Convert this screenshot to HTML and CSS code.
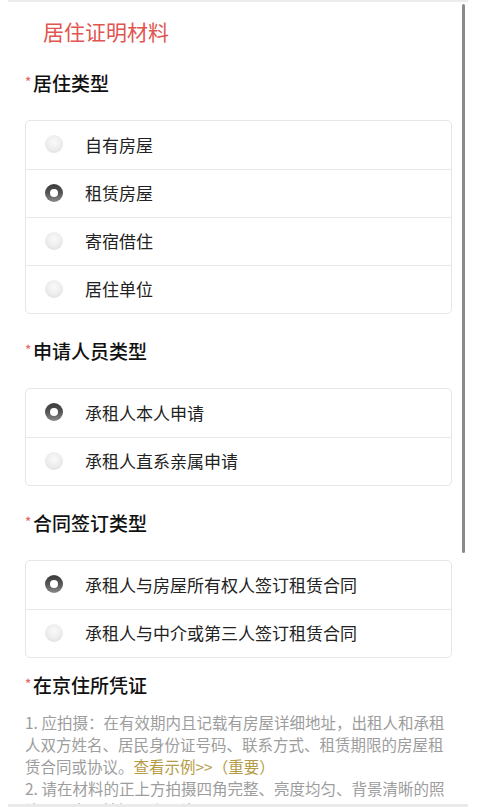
FILE: index.html
```html
<!DOCTYPE html>
<html lang="zh-CN">
<head>
    <meta charset="UTF-8">
    <meta name="viewport" content="width=device-width, initial-scale=1.0">
    <title>居住证明材料</title>
    <link rel="stylesheet" href="styles.css">
</head>
<body>
    <div class="edge edge-top"></div>
    <div class="scrollbar"></div>

    <main class="page">
        <h1 class="title">居住证明材料</h1>

        <section class="field">
            <h2 class="label"><span class="req">*</span>居住类型</h2>
            <div class="options">
                <label class="option"><span class="radio"></span>自有房屋</label>
                <label class="option"><span class="radio checked"></span>租赁房屋</label>
                <label class="option"><span class="radio"></span>寄宿借住</label>
                <label class="option"><span class="radio"></span>居住单位</label>
            </div>
        </section>

        <section class="field">
            <h2 class="label"><span class="req">*</span>申请人员类型</h2>
            <div class="options">
                <label class="option"><span class="radio checked"></span>承租人本人申请</label>
                <label class="option"><span class="radio"></span>承租人直系亲属申请</label>
            </div>
        </section>

        <section class="field">
            <h2 class="label"><span class="req">*</span>合同签订类型</h2>
            <div class="options">
                <label class="option"><span class="radio checked"></span>承租人与房屋所有权人签订租赁合同</label>
                <label class="option"><span class="radio"></span>承租人与中介或第三人签订租赁合同</label>
            </div>
        </section>

        <section class="field field-proof">
            <h2 class="label"><span class="req">*</span>在京住所凭证</h2>
            <p class="hint">1. 应拍摄：在有效期内且记载有房屋详细地址，出租人和承租人双方姓名、居民身份证号码、联系方式、租赁期限的房屋租赁合同或协议。<a class="link" href="#">查看示例&gt;&gt;（重要）</a></p>
            <p class="hint">2. 请在材料的正上方拍摄四角完整、亮度均匀、背景清晰的照片，最多可拍摄 9 张图片。</p>
        </section>
    </main>

    <div class="edge edge-bottom"></div>
</body>
</html>
```

FILE: styles.css
```css
* {
    margin: 0;
    padding: 0;
    box-sizing: border-box;
}

body {
    font-family: "Noto Sans CJK SC", "Noto Sans", sans-serif;
    background: #fff;
    color: #222;
    overflow: hidden;
    height: 807px;
}

.page {
    padding: 0 33px 0 25px;
}

.title {
    font-size: 21px;
    font-weight: normal;
    line-height: 30px;
    color: #e05550;
    padding: 16px 0 0 18px;
}

.field {
    margin-top: 22px;
}

.label {
    font-size: 19px;
    font-weight: 500;
    line-height: 30px;
    color: #111;
    display: flex;
    align-items: flex-start;
}

.req {
    color: #e46a66;
    font-size: 13px;
    line-height: 27px;
    width: 8px;
}

.options {
    margin-top: 22px;
    border: 1px solid #e6e6e6;
    border-radius: 5px;
}

.option {
    display: flex;
    align-items: center;
    height: 48px;
    padding-left: 19px;
    padding-bottom: 2px;
    font-size: 17px;
    color: #222;
    border-top: 1px solid #e8e8e8;
}

.option:first-child {
    border-top: none;
}

.radio {
    width: 18px;
    height: 18px;
    border-radius: 50%;
    margin-right: 22px;
    background: radial-gradient(circle at 50% 40%, #fafafa 0%, #ececec 55%, #d6d6d6 100%);
    position: relative;
}

.radio.checked {
    background: linear-gradient(180deg, #3a3a3a 0%, #555 50%, #8a8a8a 100%);
}

.radio.checked::after {
    content: "";
    position: absolute;
    left: 5px;
    top: 5px;
    width: 8px;
    height: 8px;
    border-radius: 50%;
    background: #fff;
}

.field-proof {
    margin-top: 12px;
}

.field-proof .label {
    margin-bottom: 11px;
}

.hint {
    font-size: 15.5px;
    line-height: 22px;
    color: #9d9d9d;
    padding-right: 6px;
}

.link {
    color: #b49c45;
    text-decoration: none;
}

/* screen edges and scrollbar sit over the page */
.edge {
    position: fixed;
    left: 8px;
    width: 460px;
    height: 2px;
    background: #ececec;
}

.edge-top {
    top: 0;
}

.edge-bottom {
    bottom: 0;
    height: 3px;
    background: #eaeaea;
}

.scrollbar {
    position: fixed;
    left: 462px;
    top: 4px;
    width: 3px;
    height: 549px;
    border-radius: 2px;
    background: #8a8a8a;
}
```
